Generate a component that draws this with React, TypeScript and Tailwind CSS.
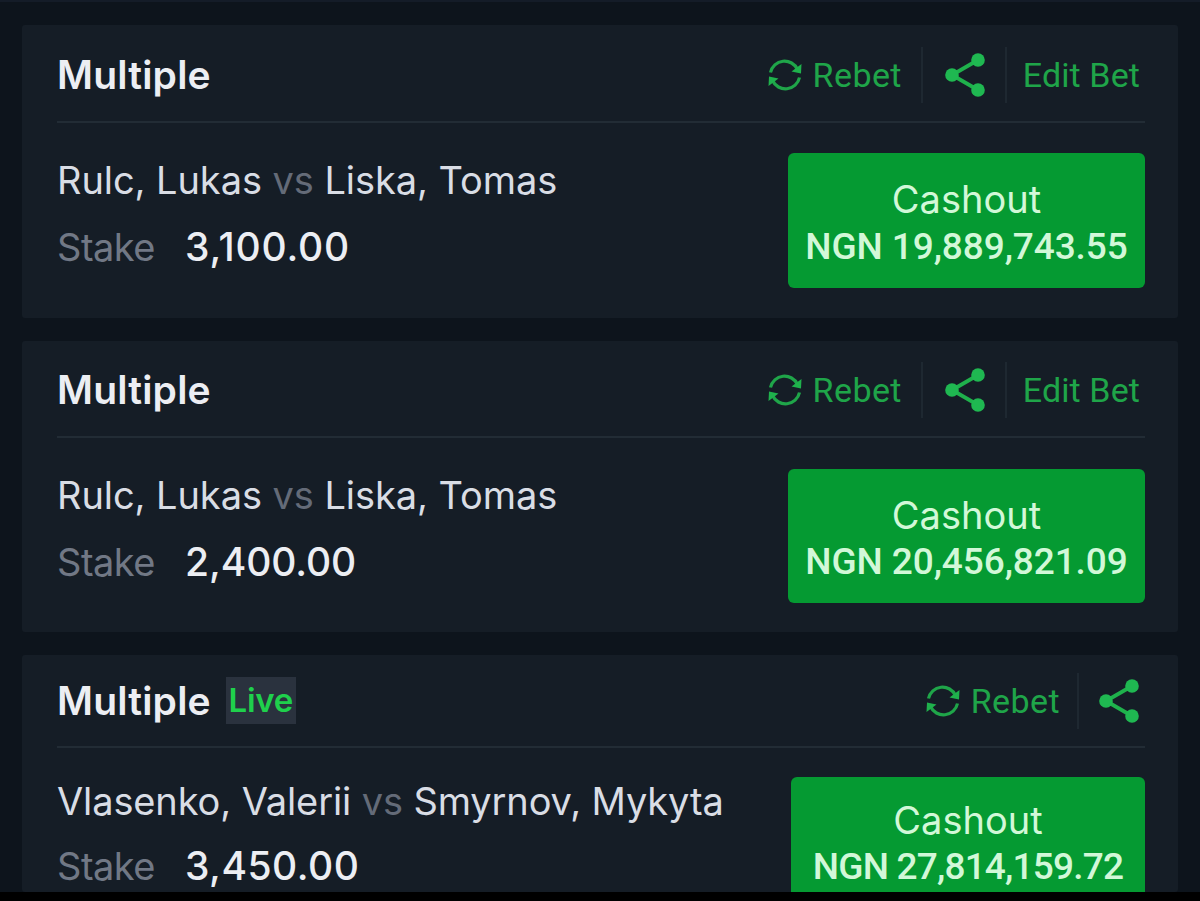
import React from "react";

interface Bet {
  id: number;
  home: string;
  away: string;
  stake: string;
  cashout: string;
  live?: boolean;
  editable?: boolean;
  cardClass: string;
  headerClass: string;
  bodyClass: string;
  matchClass: string;
  stakeRowClass: string;
  stakeClass: string;
  buttonClass: string;
  amountClass: string;
}

const bets: Bet[] = [
  {
    id: 1,
    home: "Rulc, Lukas",
    away: "Liska, Tomas",
    stake: "3,100.00",
    cashout: "NGN 19,889,743.55",
    editable: true,
    cardClass: "h-[293px]",
    headerClass: "h-[98px] pt-[3px]",
    bodyClass: "pt-[30px]",
    matchClass: "mt-px tracking-[-0.07px]",
    stakeRowClass: "mt-[27px]",
    stakeClass: "tracking-[0.8px]",
    buttonClass: "h-[135px] w-[357px] pt-[26px]",
    amountClass: "mt-[8px] tracking-[-0.1px]",
  },
  {
    id: 2,
    home: "Rulc, Lukas",
    away: "Liska, Tomas",
    stake: "2,400.00",
    cashout: "NGN 20,456,821.09",
    editable: true,
    cardClass: "mt-[23px] h-[291px]",
    headerClass: "h-[97px] pt-[2px]",
    bodyClass: "pt-[31px]",
    matchClass: "tracking-[-0.07px]",
    stakeRowClass: "mt-[27px]",
    stakeClass: "tracking-[-0.1px]",
    buttonClass: "h-[134px] w-[357px] pt-[26px]",
    amountClass: "mt-[7px] tracking-[-0.1px]",
  },
  {
    id: 3,
    home: "Vlasenko, Valerii",
    away: "Smyrnov, Mykyta",
    stake: "3,450.00",
    cashout: "NGN 27,814,159.72",
    live: true,
    cardClass: "mt-[23px] h-[237px]",
    headerClass: "h-[93px]",
    bodyClass: "pt-[29px]",
    matchClass: "-mt-[2px] tracking-[-0.12px]",
    stakeRowClass: "mt-[25px]",
    stakeClass: "tracking-[0.5px]",
    buttonClass: "h-[134px] w-[354px] pt-[23px]",
    amountClass: "mt-[7px] tracking-[-0.8px]",
  },
];

function RebetIcon() {
  return (
    <svg className="h-[36px] w-[36px] shrink-0" viewBox="0 0 36 36" fill="none">
      <path
        d="M3.500 15.500A14.300 14.300 0 0 1 30.500 12.500M32.500 20.500A14.300 14.300 0 0 1 5.500 23.500"
        stroke="#1fa549"
        strokeWidth="3.200"
      />
      <path d="M34.500 7 34 16.500 24.500 14.500ZM1.500 29 2 19.500 11.500 21.500Z" fill="#1fb14c" />
    </svg>
  );
}

function ShareIcon() {
  return (
    <svg className="h-[44px] w-[40px] shrink-0" viewBox="0 0 40 44" fill="none">
      <path d="M33 7 7 22 33 37" stroke="#1fb14c" strokeWidth="3.800" />
      <circle cx="33" cy="7" r="6.800" fill="#1fb851" />
      <circle cx="7" cy="22" r="6.800" fill="#1fb851" />
      <circle cx="33" cy="37" r="6.800" fill="#1fb851" />
    </svg>
  );
}

function Divider() {
  return <div className="h-[56px] w-[2px] shrink-0 bg-[#1e2831]" />;
}

function BetCard({ bet }: { bet: Bet }) {
  return (
    <section className={`shrink-0 overflow-hidden rounded-[3px] bg-[#151d26] pr-[33px] pl-[35px] ${bet.cardClass}`}>
      <header className={`flex items-center border-b-2 border-[#222c35] ${bet.headerClass}`}>
        <h2 className="text-[39px] leading-[48px] font-semibold tracking-[0.2px] text-[#eceef3]">
          Multiple
        </h2>
        {bet.live && (
          <span className="ml-[15px] flex h-[47px] w-[70px] items-center justify-center bg-[#2a323e] text-[33px] font-semibold tracking-[-0.2px] text-[#1fd04c]">
            Live
          </span>
        )}
        <div className="ml-auto flex items-center font-['Roboto',sans-serif] text-[34px] leading-[40px] text-[#1fa549]">
          <button className="flex items-center gap-[10px]">
            <RebetIcon />
            <span className="tracking-[0.4px]">Rebet</span>
          </button>
          <div className={bet.editable ? "mr-[22px] ml-[19px]" : "mr-[20px] ml-[17px]"}>
            <Divider />
          </div>
          <button className={bet.editable ? "" : "mr-[6px]"}>
            <ShareIcon />
          </button>
          {bet.editable && (
            <>
              <div className="mr-[16px] ml-[20px]">
                <Divider />
              </div>
              <button className="mr-[5px] tracking-[0.1px]">Edit Bet</button>
            </>
          )}
        </div>
      </header>

      <div className={`flex items-start justify-between ${bet.bodyClass}`}>
        <div className="pt-[6px] whitespace-nowrap">
          <p className={`text-[38px] leading-[40px] text-[#d9dde5] ${bet.matchClass}`}>
            {bet.home} <span className="text-[#646b78]">vs</span> {bet.away}
          </p>
          <p className={`flex text-[38px] leading-[40px] ${bet.stakeRowClass}`}>
            <span className="w-[128px] tracking-[-0.5px] text-[#717885]">Stake</span>
            <span className={`text-[39px] font-medium text-[#eceef3] ${bet.stakeClass}`}>{bet.stake}</span>
          </p>
        </div>
        <button
          className={`flex shrink-0 flex-col items-center rounded-[6px] bg-[#059a32] whitespace-nowrap text-[#d2f8d8] ${bet.buttonClass}`}
        >
          <span className="text-[38px] leading-[40px]">Cashout</span>
          <span
            className={`font-['Roboto',sans-serif] text-[37px] leading-[40px] font-medium ${bet.amountClass}`}
          >
            {bet.cashout}
          </span>
        </button>
      </div>
    </section>
  );
}

function App() {
  return (
    <main className="flex h-[901px] w-[1200px] flex-col overflow-hidden border-b-[9px] border-black bg-[#0d141c] font-['Inter',sans-serif]">
      <div className="h-[2px] shrink-0 bg-[#141c28]" />
      <div className="flex flex-col px-[22px] pt-[23px]">
        {bets.map((bet) => (
          <BetCard key={bet.id} bet={bet} />
        ))}
      </div>
    </main>
  );
}

export default App;
